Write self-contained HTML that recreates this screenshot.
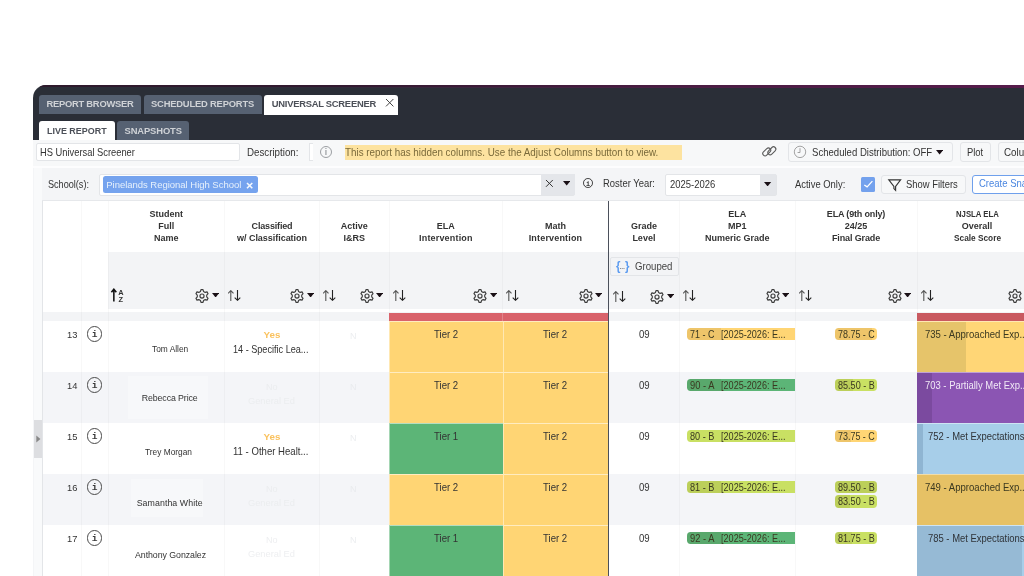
<!DOCTYPE html>
<html><head><meta charset="utf-8"><title>Universal Screener</title>
<style>
html,body{margin:0;padding:0;background:#fff;}
body{width:1024px;height:576px;overflow:hidden;position:relative;font-family:"Liberation Sans",sans-serif;}
#p{position:absolute;left:0;top:0;width:1024px;height:576px;overflow:hidden;will-change:transform;}
#p div,#p span,#p svg{position:absolute;}
#p span{white-space:nowrap;}
</style></head><body><div id="p">
<div style="left:33px;top:85px;width:991px;height:491px;background:#f4f5f7;border-top-left-radius:13px;overflow:hidden;"></div>
<div style="left:33px;top:85px;width:991px;height:55px;background:#2a2e37;border-top-left-radius:13px;overflow:hidden;"><div style="left:0;top:0;width:100%;height:1.7px;background:linear-gradient(to right,#2e1a2c 0,#321a30 30%,#4a1c42 65%,#561c4b 100%);"></div><div style="left:0;top:1.7px;width:100%;height:1.5px;background:linear-gradient(to right,rgba(86,28,75,0) 0,rgba(86,28,75,0.15) 30%,rgba(86,28,75,0.75) 65%,rgba(86,28,75,1) 100%);"></div></div>
<div style="left:39px;top:94.75px;width:102px;height:19.5px;background:#566172;border-radius:3px 3px 0 0;"></div>
<span style="left:46.50px;top:98.20px;font-size:9.4px;line-height:12px;letter-spacing:-0.259px;color:#cfd2d6;font-weight:700;">REPORT BROWSER</span>
<div style="left:143.5px;top:94.75px;width:118.1px;height:19.5px;background:#566172;border-radius:3px 3px 0 0;"></div>
<span style="left:151.00px;top:98.20px;font-size:9.4px;line-height:12px;letter-spacing:-0.191px;color:#cfd2d6;font-weight:700;">SCHEDULED REPORTS</span>
<div style="left:264.25px;top:94.6px;width:133.75px;height:20px;background:#fff;border-radius:3px 3px 0 0;"></div>
<span style="left:271.75px;top:98.20px;font-size:9.4px;line-height:12px;letter-spacing:-0.252px;color:#4c5058;font-weight:700;">UNIVERSAL SCREENER</span>
<div style="left:39px;top:120.5px;width:76px;height:19.5px;background:#fff;border-radius:3px 3px 0 0;"></div>
<span style="left:47.00px;top:124.80px;font-size:9.4px;line-height:12px;transform:scaleX(0.9541);transform-origin:0 0;color:#4c5058;font-weight:700;">LIVE REPORT</span>
<div style="left:117.25px;top:120.5px;width:71.75px;height:19.5px;background:#566172;border-radius:3px 3px 0 0;"></div>
<span style="left:124.50px;top:124.80px;font-size:9.4px;line-height:12px;letter-spacing:-0.111px;color:#cfd2d6;font-weight:700;">SNAPSHOTS</span>
<div style="left:33px;top:140px;width:991px;height:26px;background:#f7f8f9;"></div>
<div style="left:33px;top:166px;width:991px;height:1.6px;background:#fdfdfe;"></div>
<div style="left:35.5px;top:142.5px;width:204px;height:18.75px;background:#fff;border:1px solid #e3e5e8;border-radius:2px;box-sizing:border-box;"></div>
<span style="left:39.50px;top:145.80px;font-size:10.4px;line-height:14px;transform:scaleX(0.8981);transform-origin:0 0;color:#333;">HS Universal Screener</span>
<span style="left:246.50px;top:145.80px;font-size:10.4px;line-height:14px;transform:scaleX(0.9379);transform-origin:0 0;color:#333;">Description:</span>
<div style="left:308.75px;top:142.5px;width:4.25px;height:18.75px;background:#fff;border:1px solid #e3e5e8;border-right:0;box-sizing:border-box;"></div>
<div style="left:345px;top:145.25px;width:336.75px;height:14.5px;background:#fde3a0;"></div>
<span style="left:345.40px;top:146.00px;font-size:10.4px;line-height:14px;transform:scaleX(0.9467);transform-origin:0 0;color:#7a6a3a;">This report has hidden columns. Use the Adjust Columns button to view.</span>
<div style="left:787.5px;top:142px;width:165.75px;height:19.5px;background:#f7f8f9;border:1px solid #e3e5e8;border-radius:3px;box-sizing:border-box;"></div>
<span style="left:811.70px;top:145.80px;font-size:10.4px;line-height:14px;transform:scaleX(0.9209);transform-origin:0 0;color:#333;">Scheduled Distribution: OFF</span>
<div style="left:960px;top:142px;width:30.75px;height:19.5px;background:#f7f8f9;border:1px solid #e3e5e8;border-radius:3px;box-sizing:border-box;"></div>
<span style="left:967.30px;top:145.80px;font-size:10.4px;line-height:14px;transform:scaleX(0.9040);transform-origin:0 0;color:#333;">Plot</span>
<div style="left:997.5px;top:142px;width:42.5px;height:19.5px;background:#f7f8f9;border:1px solid #e3e5e8;border-radius:3px;box-sizing:border-box;"></div>
<span style="left:1003.80px;top:145.80px;font-size:10.4px;line-height:14px;transform:scaleX(0.9455);transform-origin:0 0;color:#333;">Columns</span>
<span style="left:48.00px;top:177.50px;font-size:10.4px;line-height:14px;transform:scaleX(0.8757);transform-origin:0 0;color:#333;">School(s):</span>
<div style="left:98.75px;top:173.5px;width:476.5px;height:22px;background:#fff;border:1px solid #e3e5e8;border-radius:2px;box-sizing:border-box;"></div>
<div style="left:541px;top:174.25px;width:33.5px;height:20.5px;background:#e4e6ea;"></div>
<div style="left:102.5px;top:176.4px;width:155.5px;height:16.4px;background:#75a3ee;border-radius:2.5px;"></div>
<span style="left:106.25px;top:179.30px;font-size:9.5px;line-height:12px;letter-spacing:-0.024px;color:#e6f0fb;">Pinelands Regional High School</span>
<span style="left:603.00px;top:176.90px;font-size:10.4px;line-height:14px;transform:scaleX(0.9085);transform-origin:0 0;color:#333;">Roster Year:</span>
<div style="left:665px;top:173.5px;width:112px;height:22px;background:#fff;border:1px solid #e3e5e8;border-radius:2px;box-sizing:border-box;"></div>
<div style="left:760px;top:174.25px;width:16.25px;height:20.5px;background:#e4e6ea;"></div>
<span style="left:669.75px;top:177.60px;font-size:10.4px;line-height:14px;transform:scaleX(0.9098);transform-origin:0 0;color:#333;">2025-2026</span>
<span style="left:795.00px;top:177.90px;font-size:10.4px;line-height:14px;transform:scaleX(0.9066);transform-origin:0 0;color:#333;">Active Only:</span>
<div style="left:860.6px;top:176.9px;width:14.5px;height:14.7px;background:#73a1ed;border-radius:1.5px;"></div>
<div style="left:881px;top:174.5px;width:84.6px;height:19.3px;background:#f7f8f9;border:1px solid #e3e5e8;border-radius:3px;box-sizing:border-box;"></div>
<span style="left:906.40px;top:177.50px;font-size:10.4px;line-height:14px;transform:scaleX(0.9053);transform-origin:0 0;color:#333;">Show Filters</span>
<div style="left:972px;top:174.5px;width:88px;height:19.3px;background:#fff;border:1px solid #6fa0ec;border-radius:3px;box-sizing:border-box;"></div>
<span style="left:979.40px;top:177.30px;font-size:10.4px;line-height:14px;transform:scaleX(0.9148);transform-origin:0 0;color:#4a86e0;">Create Snapshot</span>
<div style="left:33.75px;top:168px;width:7.75px;height:408px;background:#f9fafb;"></div>
<div style="left:42px;top:201px;width:982px;height:375px;background:#fff;"></div>
<div style="left:108px;top:252px;width:916px;height:57px;background:#f3f4f6;"></div>
<div style="left:42px;top:312px;width:982px;height:9.25px;background:#f3f4f6;"></div>
<div style="left:42px;top:372.25px;width:982px;height:51px;background:#f4f5f8;"></div>
<div style="left:42px;top:474.25px;width:982px;height:51px;background:#f4f5f8;"></div>
<span style="left:149.50px;top:207.50px;font-size:9px;line-height:12px;letter-spacing:-0.000px;color:#333;font-weight:700;">Student</span>
<span style="left:158.25px;top:219.70px;font-size:9px;line-height:12px;letter-spacing:0.000px;color:#333;font-weight:700;">Full</span>
<span style="left:153.99px;top:232.00px;font-size:9px;line-height:12px;letter-spacing:-0.000px;color:#333;font-weight:700;">Name</span>
<span style="left:251.55px;top:219.50px;font-size:9px;line-height:12px;letter-spacing:-0.162px;color:#333;font-weight:700;">Classified</span>
<span style="left:237.00px;top:232.00px;font-size:9px;line-height:12px;letter-spacing:-0.031px;color:#333;font-weight:700;">w/ Classification</span>
<span style="left:340.74px;top:219.50px;font-size:9px;line-height:12px;letter-spacing:0.000px;color:#333;font-weight:700;">Active</span>
<span style="left:343.50px;top:232.00px;font-size:9px;line-height:12px;letter-spacing:0.000px;color:#333;font-weight:700;">I&amp;RS</span>
<span style="left:436.85px;top:219.50px;font-size:9px;line-height:12px;letter-spacing:-0.000px;color:#333;font-weight:700;">ELA</span>
<span style="left:419.05px;top:232.00px;font-size:9px;line-height:12px;letter-spacing:0.175px;color:#333;font-weight:700;">Intervention</span>
<span style="left:545.00px;top:219.50px;font-size:9px;line-height:12px;letter-spacing:0.000px;color:#333;font-weight:700;">Math</span>
<span style="left:528.70px;top:232.00px;font-size:9px;line-height:12px;letter-spacing:0.175px;color:#333;font-weight:700;">Intervention</span>
<span style="left:630.89px;top:219.50px;font-size:9px;line-height:12px;letter-spacing:-0.000px;color:#333;font-weight:700;">Grade</span>
<span style="left:632.39px;top:232.00px;font-size:9px;line-height:12px;letter-spacing:0.000px;color:#333;font-weight:700;">Level</span>
<span style="left:728.25px;top:207.50px;font-size:9px;line-height:12px;letter-spacing:-0.000px;color:#333;font-weight:700;">ELA</span>
<span style="left:728.00px;top:219.70px;font-size:9px;line-height:12px;letter-spacing:-0.000px;color:#333;font-weight:700;">MP1</span>
<span style="left:704.99px;top:232.00px;font-size:9px;line-height:12px;letter-spacing:-0.000px;color:#333;font-weight:700;">Numeric Grade</span>
<span style="left:826.85px;top:207.50px;font-size:9px;line-height:12px;letter-spacing:-0.169px;color:#333;font-weight:700;">ELA (9th only)</span>
<span style="left:844.74px;top:219.70px;font-size:9px;line-height:12px;letter-spacing:0.000px;color:#333;font-weight:700;">24/25</span>
<span style="left:831.90px;top:232.00px;font-size:9px;line-height:12px;letter-spacing:-0.119px;color:#333;font-weight:700;">Final Grade</span>
<span style="left:955.60px;top:207.50px;font-size:9px;line-height:12px;transform:scaleX(0.8616);transform-origin:0 0;color:#333;font-weight:700;">NJSLA ELA</span>
<span style="left:961.74px;top:219.70px;font-size:9px;line-height:12px;letter-spacing:0.000px;color:#333;font-weight:700;">Overall</span>
<span style="left:953.50px;top:232.00px;font-size:9px;line-height:12px;transform:scaleX(0.9209);transform-origin:0 0;color:#333;font-weight:700;">Scale Score</span>
<div style="left:609.6px;top:257px;width:69.4px;height:18.8px;background:#f3f4f6;border:1px solid #e3e5e8;border-radius:2px;box-sizing:border-box;"></div>
<span style="left:615.8px;top:258.6px;font-size:12px;line-height:14px;color:#5b9bf0;font-weight:700;transform:scaleX(.95);transform-origin:0 0;">{</span>
<span style="left:624.6px;top:258.6px;font-size:12px;line-height:14px;color:#5b9bf0;font-weight:700;transform:scaleX(.95);transform-origin:0 0;">}</span>
<span style="left:619.6px;top:262.4px;font-size:7px;line-height:10px;color:#8a8d92;letter-spacing:-0.2px;font-weight:700;">...</span>
<span style="left:634.50px;top:260.00px;font-size:10.4px;line-height:14px;transform:scaleX(0.9265);transform-origin:0 0;color:#444;">Grouped</span>
<div style="left:80.5px;top:201px;width:1px;height:375px;background:rgba(0,0,0,0.028);"></div>
<div style="left:107.5px;top:201px;width:1px;height:375px;background:rgba(0,0,0,0.028);"></div>
<div style="left:224px;top:201px;width:1px;height:375px;background:rgba(0,0,0,0.028);"></div>
<div style="left:319px;top:201px;width:1px;height:375px;background:rgba(0,0,0,0.028);"></div>
<div style="left:388.5px;top:201px;width:1px;height:375px;background:rgba(0,0,0,0.028);"></div>
<div style="left:502.2px;top:201px;width:1px;height:375px;background:rgba(0,0,0,0.028);"></div>
<div style="left:679px;top:201px;width:1px;height:375px;background:rgba(0,0,0,0.028);"></div>
<div style="left:794.5px;top:201px;width:1px;height:375px;background:rgba(0,0,0,0.028);"></div>
<div style="left:916.5px;top:201px;width:1px;height:375px;background:rgba(0,0,0,0.028);"></div>
<div style="left:389.25px;top:312.5px;width:219.05px;height:8.75px;background:#d9636b;"></div>
<div style="left:917px;top:312.5px;width:107px;height:8.75px;background:#c95a60;"></div>
<div style="left:502.2px;top:312.5px;width:1px;height:8.75px;background:rgba(255,255,255,.22);"></div>
<div style="left:389.25px;top:321.25px;width:113.45px;height:51px;background:#ffd574;border-top:1px solid rgba(255,255,255,.55);border-left:1px solid rgba(255,255,255,.45);box-sizing:border-box;"></div>
<span style="left:433.73px;top:327.50px;font-size:10.4px;line-height:14px;transform:scaleX(0.9250);transform-origin:0 0;color:#333;">Tier 2</span>
<div style="left:502.95px;top:321.25px;width:105.35px;height:51px;background:#ffd574;border-top:1px solid rgba(255,255,255,.55);border-left:1px solid rgba(255,255,255,.45);box-sizing:border-box;"></div>
<span style="left:543.38px;top:327.50px;font-size:10.4px;line-height:14px;transform:scaleX(0.9250);transform-origin:0 0;color:#333;">Tier 2</span>
<div style="left:389.25px;top:372.25px;width:113.45px;height:51px;background:#ffd574;border-top:1px solid rgba(255,255,255,.55);border-left:1px solid rgba(255,255,255,.45);box-sizing:border-box;"></div>
<span style="left:433.73px;top:378.50px;font-size:10.4px;line-height:14px;transform:scaleX(0.9250);transform-origin:0 0;color:#333;">Tier 2</span>
<div style="left:502.95px;top:372.25px;width:105.35px;height:51px;background:#ffd574;border-top:1px solid rgba(255,255,255,.55);border-left:1px solid rgba(255,255,255,.45);box-sizing:border-box;"></div>
<span style="left:543.38px;top:378.50px;font-size:10.4px;line-height:14px;transform:scaleX(0.9250);transform-origin:0 0;color:#333;">Tier 2</span>
<div style="left:389.25px;top:423.25px;width:113.45px;height:51px;background:#5cb577;border-top:1px solid rgba(255,255,255,.55);border-left:1px solid rgba(255,255,255,.45);box-sizing:border-box;"></div>
<span style="left:433.73px;top:429.50px;font-size:10.4px;line-height:14px;transform:scaleX(0.9250);transform-origin:0 0;color:#333;">Tier 1</span>
<div style="left:502.95px;top:423.25px;width:105.35px;height:51px;background:#ffd574;border-top:1px solid rgba(255,255,255,.55);border-left:1px solid rgba(255,255,255,.45);box-sizing:border-box;"></div>
<span style="left:543.38px;top:429.50px;font-size:10.4px;line-height:14px;transform:scaleX(0.9250);transform-origin:0 0;color:#333;">Tier 2</span>
<div style="left:389.25px;top:474.25px;width:113.45px;height:51px;background:#ffd574;border-top:1px solid rgba(255,255,255,.55);border-left:1px solid rgba(255,255,255,.45);box-sizing:border-box;"></div>
<span style="left:433.73px;top:480.50px;font-size:10.4px;line-height:14px;transform:scaleX(0.9250);transform-origin:0 0;color:#333;">Tier 2</span>
<div style="left:502.95px;top:474.25px;width:105.35px;height:51px;background:#ffd574;border-top:1px solid rgba(255,255,255,.55);border-left:1px solid rgba(255,255,255,.45);box-sizing:border-box;"></div>
<span style="left:543.38px;top:480.50px;font-size:10.4px;line-height:14px;transform:scaleX(0.9250);transform-origin:0 0;color:#333;">Tier 2</span>
<div style="left:389.25px;top:525.25px;width:113.45px;height:51px;background:#5cb577;border-top:1px solid rgba(255,255,255,.55);border-left:1px solid rgba(255,255,255,.45);box-sizing:border-box;"></div>
<span style="left:433.73px;top:531.50px;font-size:10.4px;line-height:14px;transform:scaleX(0.9250);transform-origin:0 0;color:#333;">Tier 1</span>
<div style="left:502.95px;top:525.25px;width:105.35px;height:51px;background:#ffd574;border-top:1px solid rgba(255,255,255,.55);border-left:1px solid rgba(255,255,255,.45);box-sizing:border-box;"></div>
<span style="left:543.38px;top:531.50px;font-size:10.4px;line-height:14px;transform:scaleX(0.9250);transform-origin:0 0;color:#333;">Tier 2</span>
<div style="left:607.75px;top:201px;width:1.35px;height:375px;background:#4b505b;"></div>
<div style="left:42px;top:199.8px;width:982px;height:1.2px;background:#e6e8eb;"></div>
<div style="left:41.5px;top:201px;width:1px;height:375px;background:#e3e5e8;"></div>
<div style="left:127.75px;top:375.6px;width:80.65px;height:43.8px;background:#f7f8fa;"></div>
<div style="left:131px;top:478.5px;width:72px;height:38.2px;background:#f7f8fa;"></div>
<span style="left:66.50px;top:327.50px;font-size:9.9px;line-height:13px;transform:scaleX(0.9444);transform-origin:0 0;color:#333;">13</span>
<div style="left:86.9px;top:326px;width:15.6px;height:15.6px;border:1.4px solid #4a4a4a;border-radius:50%;box-sizing:border-box;"></div>
<span style="left:90.7px;top:329.4px;width:8px;text-align:center;font-family:'Liberation Mono',monospace;font-weight:700;font-size:9.6px;line-height:12px;color:#3a3a3a">i</span>
<span style="left:151.78px;top:343.50px;font-size:8.8px;line-height:11px;transform:scaleX(0.9501);transform-origin:0 0;color:#333;">Tom Allen</span>
<span style="left:263.55px;top:328.40px;font-size:9.8px;line-height:13px;letter-spacing:0.000px;color:#fac25f;font-weight:700;">Yes</span>
<span style="left:233.00px;top:342.90px;font-size:10.4px;line-height:14px;transform:scaleX(0.8765);transform-origin:0 0;color:#333;">14 - Specific Lea...</span>
<span style="left:350.23px;top:328.60px;font-size:9.8px;line-height:13px;transform:scaleX(0.9250);transform-origin:0 0;color:#eceef0;">N</span>
<span style="left:638.55px;top:327.50px;font-size:10.4px;line-height:14px;transform:scaleX(0.9250);transform-origin:0 0;color:#333;">09</span>
<div style="left:687.1px;top:327.95px;width:107.9px;height:12.45px;background:#ffd574;border-radius:3.7px 0 0 3.7px;"></div>
<div style="left:687.1px;top:327.95px;width:34.15px;height:12.45px;background:rgba(60,40,0,0.085);border-radius:3.7px 0 0 3.7px;"></div>
<span style="left:689.80px;top:327.80px;font-size:10.4px;line-height:14px;transform:scaleX(0.8615);transform-origin:0 0;color:#3a3820;">71 - C</span>
<span style="left:720.80px;top:327.80px;font-size:10.4px;line-height:14px;transform:scaleX(0.8742);transform-origin:0 0;color:#3a3820;">[2025-2026: E...</span>
<div style="left:834.75px;top:327.95px;width:42.45px;height:12.45px;background:#ffd574;border-radius:3.7px;"></div>
<div style="left:834.75px;top:327.95px;width:37.25px;height:12.45px;background:rgba(60,40,0,0.085);border-radius:3.7px 0 0 3.7px;"></div>
<span style="left:837.80px;top:327.95px;font-size:10.4px;line-height:14px;transform:scaleX(0.8602);transform-origin:0 0;color:#3a3820;">78.75 - C</span>
<div style="left:917.1px;top:321.25px;width:106.9px;height:51px;background:#ffd676;border-top:1px solid rgba(255,255,255,.45);box-sizing:border-box;"></div>
<div style="left:917.1px;top:322.25px;width:48.7px;height:50px;background:#e6c46a;"></div>
<span style="left:925.00px;top:328.10px;font-size:10.4px;line-height:14px;transform:scaleX(0.9182);transform-origin:0 0;color:#3a3820;">735 - Approached Exp...</span>
<span style="left:66.50px;top:378.50px;font-size:9.9px;line-height:13px;transform:scaleX(0.9444);transform-origin:0 0;color:#333;">14</span>
<div style="left:86.9px;top:377px;width:15.6px;height:15.6px;border:1.4px solid #4a4a4a;border-radius:50%;box-sizing:border-box;"></div>
<span style="left:90.7px;top:380.4px;width:8px;text-align:center;font-family:'Liberation Mono',monospace;font-weight:700;font-size:9.6px;line-height:12px;color:#3a3a3a">i</span>
<span style="left:141.70px;top:392.70px;font-size:8.8px;line-height:11px;letter-spacing:-0.094px;color:#333;">Rebecca Price</span>
<span style="left:265.71px;top:379.60px;font-size:9.8px;line-height:13px;transform:scaleX(0.9250);transform-origin:0 0;color:#ebedef;">No</span>
<span style="left:248.30px;top:394.20px;font-size:9.8px;line-height:13px;transform:scaleX(0.9460);transform-origin:0 0;color:#ebedef;">General Ed</span>
<span style="left:350.23px;top:379.60px;font-size:9.8px;line-height:13px;transform:scaleX(0.9250);transform-origin:0 0;color:#e9ebee;">N</span>
<span style="left:638.55px;top:378.50px;font-size:10.4px;line-height:14px;transform:scaleX(0.9250);transform-origin:0 0;color:#333;">09</span>
<div style="left:687.1px;top:378.95px;width:107.9px;height:12.45px;background:#5cb577;border-radius:3.7px 0 0 3.7px;"></div>
<div style="left:687.1px;top:378.95px;width:34.15px;height:12.45px;background:rgba(60,40,0,0.085);border-radius:3.7px 0 0 3.7px;"></div>
<span style="left:689.80px;top:378.80px;font-size:10.4px;line-height:14px;transform:scaleX(0.8979);transform-origin:0 0;color:#3a3820;">90 - A</span>
<span style="left:720.80px;top:378.80px;font-size:10.4px;line-height:14px;transform:scaleX(0.8742);transform-origin:0 0;color:#3a3820;">[2025-2026: E...</span>
<div style="left:834.75px;top:378.95px;width:42.45px;height:12.45px;background:#c9e063;border-radius:3.7px;"></div>
<div style="left:834.75px;top:378.95px;width:17.75px;height:12.45px;background:rgba(60,40,0,0.085);border-radius:3.7px 0 0 3.7px;"></div>
<span style="left:837.80px;top:378.95px;font-size:10.4px;line-height:14px;transform:scaleX(0.8719);transform-origin:0 0;color:#3a3820;">85.50 - B</span>
<div style="left:917.1px;top:372.25px;width:106.9px;height:51px;background:#8b55b3;border-top:1px solid rgba(255,255,255,.45);box-sizing:border-box;"></div>
<div style="left:917.1px;top:373.25px;width:15.1px;height:50px;background:#7b4a9f;"></div>
<span style="left:925.00px;top:379.10px;font-size:10.4px;line-height:14px;transform:scaleX(0.9080);transform-origin:0 0;color:#f1e9f6;">703 - Partially Met Exp...</span>
<span style="left:66.50px;top:429.50px;font-size:9.9px;line-height:13px;transform:scaleX(0.9444);transform-origin:0 0;color:#333;">15</span>
<div style="left:86.9px;top:428px;width:15.6px;height:15.6px;border:1.4px solid #4a4a4a;border-radius:50%;box-sizing:border-box;"></div>
<span style="left:90.7px;top:431.4px;width:8px;text-align:center;font-family:'Liberation Mono',monospace;font-weight:700;font-size:9.6px;line-height:12px;color:#3a3a3a">i</span>
<span style="left:145.20px;top:446.50px;font-size:8.8px;line-height:11px;transform:scaleX(0.9484);transform-origin:0 0;color:#333;">Trey Morgan</span>
<span style="left:263.55px;top:430.40px;font-size:9.8px;line-height:13px;letter-spacing:0.000px;color:#fac25f;font-weight:700;">Yes</span>
<span style="left:233.00px;top:444.90px;font-size:10.4px;line-height:14px;transform:scaleX(0.9220);transform-origin:0 0;color:#333;">11 - Other Healt...</span>
<span style="left:350.23px;top:430.60px;font-size:9.8px;line-height:13px;transform:scaleX(0.9250);transform-origin:0 0;color:#eceef0;">N</span>
<span style="left:638.55px;top:429.50px;font-size:10.4px;line-height:14px;transform:scaleX(0.9250);transform-origin:0 0;color:#333;">09</span>
<div style="left:687.1px;top:429.95px;width:107.9px;height:12.45px;background:#c9e063;border-radius:3.7px 0 0 3.7px;"></div>
<span style="left:689.80px;top:429.80px;font-size:10.4px;line-height:14px;transform:scaleX(0.8794);transform-origin:0 0;color:#3a3820;">80 - B</span>
<span style="left:720.80px;top:429.80px;font-size:10.4px;line-height:14px;transform:scaleX(0.8742);transform-origin:0 0;color:#3a3820;">[2025-2026: E...</span>
<div style="left:834.75px;top:429.95px;width:42.45px;height:12.45px;background:#ffd574;border-radius:3.7px;"></div>
<div style="left:834.75px;top:429.95px;width:16.5px;height:12.45px;background:rgba(60,40,0,0.085);border-radius:3.7px 0 0 3.7px;"></div>
<span style="left:837.80px;top:429.95px;font-size:10.4px;line-height:14px;transform:scaleX(0.8602);transform-origin:0 0;color:#3a3820;">73.75 - C</span>
<div style="left:917.1px;top:423.25px;width:106.9px;height:51px;background:#a7cee9;border-top:1px solid rgba(255,255,255,.45);box-sizing:border-box;"></div>
<div style="left:917.1px;top:424.25px;width:6.4px;height:50px;background:#8fb5d2;"></div>
<span style="left:928.10px;top:430.10px;font-size:10.4px;line-height:14px;transform:scaleX(0.9084);transform-origin:0 0;color:#2f3338;">752 - Met Expectations</span>
<span style="left:66.50px;top:480.50px;font-size:9.9px;line-height:13px;transform:scaleX(0.9444);transform-origin:0 0;color:#333;">16</span>
<div style="left:86.9px;top:479px;width:15.6px;height:15.6px;border:1.4px solid #4a4a4a;border-radius:50%;box-sizing:border-box;"></div>
<span style="left:90.7px;top:482.4px;width:8px;text-align:center;font-family:'Liberation Mono',monospace;font-weight:700;font-size:9.6px;line-height:12px;color:#3a3a3a">i</span>
<span style="left:136.70px;top:498.10px;font-size:8.8px;line-height:11px;letter-spacing:0.067px;color:#333;">Samantha White</span>
<span style="left:265.71px;top:481.60px;font-size:9.8px;line-height:13px;transform:scaleX(0.9250);transform-origin:0 0;color:#ebedef;">No</span>
<span style="left:248.30px;top:496.20px;font-size:9.8px;line-height:13px;transform:scaleX(0.9460);transform-origin:0 0;color:#ebedef;">General Ed</span>
<span style="left:350.23px;top:481.60px;font-size:9.8px;line-height:13px;transform:scaleX(0.9250);transform-origin:0 0;color:#e9ebee;">N</span>
<span style="left:638.55px;top:480.50px;font-size:10.4px;line-height:14px;transform:scaleX(0.9250);transform-origin:0 0;color:#333;">09</span>
<div style="left:687.1px;top:480.95px;width:107.9px;height:12.45px;background:#c9e063;border-radius:3.7px 0 0 3.7px;"></div>
<div style="left:687.1px;top:480.95px;width:34.15px;height:12.45px;background:rgba(60,40,0,0.085);border-radius:3.7px 0 0 3.7px;"></div>
<span style="left:689.80px;top:480.80px;font-size:10.4px;line-height:14px;transform:scaleX(0.8794);transform-origin:0 0;color:#3a3820;">81 - B</span>
<span style="left:720.80px;top:480.80px;font-size:10.4px;line-height:14px;transform:scaleX(0.8742);transform-origin:0 0;color:#3a3820;">[2025-2026: E...</span>
<div style="left:834.75px;top:480.95px;width:42.45px;height:12.45px;background:#c9e063;border-radius:3.7px;"></div>
<div style="left:834.75px;top:480.95px;width:42.45px;height:12.45px;background:rgba(60,40,0,0.085);border-radius:3.7px;"></div>
<span style="left:837.80px;top:480.95px;font-size:10.4px;line-height:14px;transform:scaleX(0.8719);transform-origin:0 0;color:#3a3820;">89.50 - B</span>
<div style="left:834.75px;top:495.45px;width:42.45px;height:12.45px;background:#c9e063;border-radius:3.7px;"></div>
<div style="left:834.75px;top:495.45px;width:15px;height:12.45px;background:rgba(60,40,0,0.085);border-radius:3.7px 0 0 3.7px;"></div>
<span style="left:837.80px;top:495.45px;font-size:10.4px;line-height:14px;transform:scaleX(0.8719);transform-origin:0 0;color:#3a3820;">83.50 - B</span>
<div style="left:917.1px;top:474.25px;width:106.9px;height:51px;background:#e6c165;border-top:1px solid rgba(255,255,255,.45);box-sizing:border-box;"></div>
<span style="left:925.00px;top:481.10px;font-size:10.4px;line-height:14px;transform:scaleX(0.9182);transform-origin:0 0;color:#3a3820;">749 - Approached Exp...</span>
<span style="left:66.50px;top:531.50px;font-size:9.9px;line-height:13px;transform:scaleX(0.9444);transform-origin:0 0;color:#333;">17</span>
<div style="left:86.9px;top:530px;width:15.6px;height:15.6px;border:1.4px solid #4a4a4a;border-radius:50%;box-sizing:border-box;"></div>
<span style="left:90.7px;top:533.4px;width:8px;text-align:center;font-family:'Liberation Mono',monospace;font-weight:700;font-size:9.6px;line-height:12px;color:#3a3a3a">i</span>
<span style="left:135.00px;top:550.30px;font-size:8.8px;line-height:11px;letter-spacing:-0.057px;color:#333;">Anthony Gonzalez</span>
<span style="left:265.71px;top:532.60px;font-size:9.8px;line-height:13px;transform:scaleX(0.9250);transform-origin:0 0;color:#eeeff1;">No</span>
<span style="left:248.30px;top:547.20px;font-size:9.8px;line-height:13px;transform:scaleX(0.9460);transform-origin:0 0;color:#eeeff1;">General Ed</span>
<span style="left:350.23px;top:532.60px;font-size:9.8px;line-height:13px;transform:scaleX(0.9250);transform-origin:0 0;color:#eceef0;">N</span>
<span style="left:638.55px;top:531.50px;font-size:10.4px;line-height:14px;transform:scaleX(0.9250);transform-origin:0 0;color:#333;">09</span>
<div style="left:687.1px;top:531.95px;width:107.9px;height:12.45px;background:#5cb577;border-radius:3.7px 0 0 3.7px;"></div>
<div style="left:687.1px;top:531.95px;width:34.15px;height:12.45px;background:rgba(60,40,0,0.085);border-radius:3.7px 0 0 3.7px;"></div>
<span style="left:689.80px;top:531.80px;font-size:10.4px;line-height:14px;transform:scaleX(0.8979);transform-origin:0 0;color:#3a3820;">92 - A</span>
<span style="left:720.80px;top:531.80px;font-size:10.4px;line-height:14px;transform:scaleX(0.8742);transform-origin:0 0;color:#3a3820;">[2025-2026: E...</span>
<div style="left:834.75px;top:531.95px;width:42.45px;height:12.45px;background:#c9e063;border-radius:3.7px;"></div>
<div style="left:834.75px;top:531.95px;width:17.25px;height:12.45px;background:rgba(60,40,0,0.085);border-radius:3.7px 0 0 3.7px;"></div>
<span style="left:837.80px;top:531.95px;font-size:10.4px;line-height:14px;transform:scaleX(0.8719);transform-origin:0 0;color:#3a3820;">81.75 - B</span>
<div style="left:917.1px;top:525.25px;width:106.9px;height:51px;background:#a7cee9;border-top:1px solid rgba(255,255,255,.45);box-sizing:border-box;"></div>
<div style="left:917.1px;top:526.25px;width:104.9px;height:50px;background:#96bad5;"></div>
<span style="left:928.10px;top:532.10px;font-size:10.4px;line-height:14px;transform:scaleX(0.9084);transform-origin:0 0;color:#2f3338;">785 - Met Expectations</span>
<svg style="left:385.3px;top:98.4px;" width="9.4" height="9.4" viewBox="0 0 9.4 9.4"><path d="M1 1L8.4 8.4M8.4 1L1 8.4" stroke="#444" stroke-width="1.0" fill="none"/></svg>
<div style="left:319.9px;top:145.8px;width:12.2px;height:12.2px;border:0.9px solid #9c9fa3;border-radius:50%;box-sizing:border-box;"></div>
<span style="left:321px;top:146.9px;width:10px;text-align:center;font-family:'Liberation Sans',sans-serif;font-weight:700;font-size:8.5px;line-height:10px;color:#9c9fa3">i</span>
<svg style="left:758.5px;top:143px;" width="20" height="16" viewBox="0 0 20 16"><g fill="none" stroke="#5c5c5c" stroke-width="1.1"><rect x="3.1" y="6.6" width="9.3" height="4.6" rx="2.3" transform="rotate(-45 7.75 8.9)"/><rect x="8.2" y="5.5" width="9.3" height="4.6" rx="2.3" transform="rotate(-45 12.85 7.8)"/></g></svg>
<svg style="left:793px;top:145px;" width="14" height="14" viewBox="0 0 14 14"><circle cx="7" cy="6.9" r="5.7" fill="none" stroke="#999" stroke-width="0.9"/><path d="M7 3.2V7.5H4.6" fill="none" stroke="#999" stroke-width="0.9"/></svg>
<svg style="left:936px;top:150px;" width="7.2" height="4.6" viewBox="0 0 7.2 4.6"><path d="M0 0H7.2L3.6 4.6Z" fill="#1a1016"/></svg>
<svg style="left:245.85px;top:181.55px;" width="7.3" height="7.3" viewBox="0 0 7.3 7.3"><path d="M1 1L6.3 6.3M6.3 1L1 6.3" stroke="#f4f8fe" stroke-width="1.6" fill="none"/></svg>
<svg style="left:544.8px;top:178.8px;" width="8.8" height="8.8" viewBox="0 0 8.8 8.8"><path d="M1 1L7.8 7.8M7.8 1L1 7.8" stroke="#333" stroke-width="1.0" fill="none"/></svg>
<svg style="left:562.8px;top:181.4px;" width="7.4" height="4.4" viewBox="0 0 7.4 4.4"><path d="M0 0H7.4L3.7 4.4Z" fill="#1a1016"/></svg>
<div style="left:583.2px;top:178.2px;width:9.8px;height:9.8px;border:0.95px solid #3a3a3a;border-radius:50%;box-sizing:border-box;"></div>
<span style="left:583.1px;top:179.8px;width:10px;text-align:center;font-family:'Liberation Mono',monospace;font-weight:700;font-size:6.8px;line-height:8px;color:#3a3a3a">i</span>
<svg style="left:764.4px;top:181.6px;" width="7.2" height="4.4" viewBox="0 0 7.2 4.4"><path d="M0 0H7.2L3.6 4.4Z" fill="#1a1016"/></svg>
<svg style="left:860.6px;top:176.9px;" width="14.5" height="14.7" viewBox="0 0 14.5 14.7"><path d="M3.3 8L6.1 9.9L11.4 4.2" fill="none" stroke="#fff" stroke-width="1.25"/></svg>
<svg style="left:887px;top:178px;" width="16" height="14" viewBox="0 0 16 14"><path d="M1.8 1.9H13.6L8.6 8.4V12.3L6.9 10.6V8.4Z" fill="none" stroke="#333" stroke-width="1.15" stroke-linejoin="miter"/></svg>
<div style="left:33.75px;top:420px;width:8.5px;height:37.5px;background:#dddee1;"></div>
<svg style="left:36px;top:435px;" width="5" height="8" viewBox="0 0 5 8"><path d="M0.3 0.5L4.4 4L0.3 7.5Z" fill="#888"/></svg>
<svg style="left:110px;top:287.5px;" width="15" height="15" viewBox="0 0 15 15"><path d="M3.85 13.6V1.6M1.4 4.2L3.85 1.2L6.3 4.2" fill="none" stroke="#111" stroke-width="1.55"/><text x="8.3" y="6.5" font-family="Liberation Sans, sans-serif" font-weight="700" font-size="7.4" fill="#333">A</text><text x="8.5" y="13.6" font-family="Liberation Sans, sans-serif" font-weight="700" font-size="7.4" fill="#333">Z</text></svg>
<svg style="left:194.1px;top:287.7px;" width="16" height="16" viewBox="0 0 16 16"><path d="M6.47 3.44L6.98 1.58L9.02 1.58L9.53 3.44L11.18 4.39L13.05 3.91L14.07 5.67L12.72 7.05L12.72 8.95L14.07 10.33L13.05 12.09L11.18 11.61L9.53 12.56L9.02 14.42L6.98 14.42L6.47 12.56L4.82 11.61L2.95 12.09L1.93 10.33L3.28 8.95L3.28 7.05L1.93 5.67L2.95 3.91L4.82 4.39Z" fill="none" stroke="#3c3c3c" stroke-width="1.15" stroke-linejoin="round"/><circle cx="8" cy="8" r="2.05" fill="none" stroke="#3c3c3c" stroke-width="1.15"/></svg>
<svg style="left:211.5px;top:292.95px;" width="7.2" height="4.5" viewBox="0 0 7.2 4.5"><path d="M0 0H7.2L3.6 4.5Z" fill="#1a1016"/></svg>
<svg style="left:228.2px;top:290.4px;" width="13" height="10.9" viewBox="0 0 13 10.9"><path d="M2.8 10.900000000000034V0.6M0.09999999999999964 3.3L2.8 0.6L5.5 3.3" stroke="#555" stroke-width="1.1" fill="none"/><path d="M9.5 0V10.300000000000034M6.7 7.600000000000034L9.5 10.300000000000034L12.3 7.600000000000034" stroke="#222" stroke-width="1.1" fill="none"/></svg>
<svg style="left:289.1px;top:287.7px;" width="16" height="16" viewBox="0 0 16 16"><path d="M6.47 3.44L6.98 1.58L9.02 1.58L9.53 3.44L11.18 4.39L13.05 3.91L14.07 5.67L12.72 7.05L12.72 8.95L14.07 10.33L13.05 12.09L11.18 11.61L9.53 12.56L9.02 14.42L6.98 14.42L6.47 12.56L4.82 11.61L2.95 12.09L1.93 10.33L3.28 8.95L3.28 7.05L1.93 5.67L2.95 3.91L4.82 4.39Z" fill="none" stroke="#3c3c3c" stroke-width="1.15" stroke-linejoin="round"/><circle cx="8" cy="8" r="2.05" fill="none" stroke="#3c3c3c" stroke-width="1.15"/></svg>
<svg style="left:306.5px;top:292.95px;" width="7.2" height="4.5" viewBox="0 0 7.2 4.5"><path d="M0 0H7.2L3.6 4.5Z" fill="#1a1016"/></svg>
<svg style="left:323.2px;top:290.4px;" width="13" height="10.9" viewBox="0 0 13 10.9"><path d="M2.8 10.900000000000034V0.6M0.09999999999999964 3.3L2.8 0.6L5.5 3.3" stroke="#555" stroke-width="1.1" fill="none"/><path d="M9.5 0V10.300000000000034M6.7 7.600000000000034L9.5 10.300000000000034L12.3 7.600000000000034" stroke="#222" stroke-width="1.1" fill="none"/></svg>
<svg style="left:358.6px;top:287.7px;" width="16" height="16" viewBox="0 0 16 16"><path d="M6.47 3.44L6.98 1.58L9.02 1.58L9.53 3.44L11.18 4.39L13.05 3.91L14.07 5.67L12.72 7.05L12.72 8.95L14.07 10.33L13.05 12.09L11.18 11.61L9.53 12.56L9.02 14.42L6.98 14.42L6.47 12.56L4.82 11.61L2.95 12.09L1.93 10.33L3.28 8.95L3.28 7.05L1.93 5.67L2.95 3.91L4.82 4.39Z" fill="none" stroke="#3c3c3c" stroke-width="1.15" stroke-linejoin="round"/><circle cx="8" cy="8" r="2.05" fill="none" stroke="#3c3c3c" stroke-width="1.15"/></svg>
<svg style="left:376px;top:292.95px;" width="7.2" height="4.5" viewBox="0 0 7.2 4.5"><path d="M0 0H7.2L3.6 4.5Z" fill="#1a1016"/></svg>
<svg style="left:392.7px;top:290.4px;" width="13" height="10.9" viewBox="0 0 13 10.9"><path d="M2.8 10.900000000000034V0.6M0.09999999999999964 3.3L2.8 0.6L5.5 3.3" stroke="#555" stroke-width="1.1" fill="none"/><path d="M9.5 0V10.300000000000034M6.7 7.600000000000034L9.5 10.300000000000034L12.3 7.600000000000034" stroke="#222" stroke-width="1.1" fill="none"/></svg>
<svg style="left:472.3px;top:287.7px;" width="16" height="16" viewBox="0 0 16 16"><path d="M6.47 3.44L6.98 1.58L9.02 1.58L9.53 3.44L11.18 4.39L13.05 3.91L14.07 5.67L12.72 7.05L12.72 8.95L14.07 10.33L13.05 12.09L11.18 11.61L9.53 12.56L9.02 14.42L6.98 14.42L6.47 12.56L4.82 11.61L2.95 12.09L1.93 10.33L3.28 8.95L3.28 7.05L1.93 5.67L2.95 3.91L4.82 4.39Z" fill="none" stroke="#3c3c3c" stroke-width="1.15" stroke-linejoin="round"/><circle cx="8" cy="8" r="2.05" fill="none" stroke="#3c3c3c" stroke-width="1.15"/></svg>
<svg style="left:489.7px;top:292.95px;" width="7.2" height="4.5" viewBox="0 0 7.2 4.5"><path d="M0 0H7.2L3.6 4.5Z" fill="#1a1016"/></svg>
<svg style="left:506.4px;top:290.4px;" width="13" height="10.9" viewBox="0 0 13 10.9"><path d="M2.8 10.900000000000034V0.6M0.09999999999999964 3.3L2.8 0.6L5.5 3.3" stroke="#555" stroke-width="1.1" fill="none"/><path d="M9.5 0V10.300000000000034M6.7 7.600000000000034L9.5 10.300000000000034L12.3 7.600000000000034" stroke="#222" stroke-width="1.1" fill="none"/></svg>
<svg style="left:577.9px;top:287.7px;" width="16" height="16" viewBox="0 0 16 16"><path d="M6.47 3.44L6.98 1.58L9.02 1.58L9.53 3.44L11.18 4.39L13.05 3.91L14.07 5.67L12.72 7.05L12.72 8.95L14.07 10.33L13.05 12.09L11.18 11.61L9.53 12.56L9.02 14.42L6.98 14.42L6.47 12.56L4.82 11.61L2.95 12.09L1.93 10.33L3.28 8.95L3.28 7.05L1.93 5.67L2.95 3.91L4.82 4.39Z" fill="none" stroke="#3c3c3c" stroke-width="1.15" stroke-linejoin="round"/><circle cx="8" cy="8" r="2.05" fill="none" stroke="#3c3c3c" stroke-width="1.15"/></svg>
<svg style="left:595.3px;top:292.95px;" width="7.2" height="4.5" viewBox="0 0 7.2 4.5"><path d="M0 0H7.2L3.6 4.5Z" fill="#1a1016"/></svg>
<svg style="left:612.8px;top:291.4px;" width="13" height="10.9" viewBox="0 0 13 10.9"><path d="M2.8 10.900000000000034V0.6M0.09999999999999964 3.3L2.8 0.6L5.5 3.3" stroke="#555" stroke-width="1.1" fill="none"/><path d="M9.5 0V10.300000000000034M6.7 7.600000000000034L9.5 10.300000000000034L12.3 7.600000000000034" stroke="#222" stroke-width="1.1" fill="none"/></svg>
<svg style="left:649.1px;top:288.7px;" width="16" height="16" viewBox="0 0 16 16"><path d="M6.47 3.44L6.98 1.58L9.02 1.58L9.53 3.44L11.18 4.39L13.05 3.91L14.07 5.67L12.72 7.05L12.72 8.95L14.07 10.33L13.05 12.09L11.18 11.61L9.53 12.56L9.02 14.42L6.98 14.42L6.47 12.56L4.82 11.61L2.95 12.09L1.93 10.33L3.28 8.95L3.28 7.05L1.93 5.67L2.95 3.91L4.82 4.39Z" fill="none" stroke="#3c3c3c" stroke-width="1.15" stroke-linejoin="round"/><circle cx="8" cy="8" r="2.05" fill="none" stroke="#3c3c3c" stroke-width="1.15"/></svg>
<svg style="left:666.5px;top:293.95px;" width="7.2" height="4.5" viewBox="0 0 7.2 4.5"><path d="M0 0H7.2L3.6 4.5Z" fill="#1a1016"/></svg>
<svg style="left:683.2px;top:290.4px;" width="13" height="10.9" viewBox="0 0 13 10.9"><path d="M2.8 10.900000000000034V0.6M0.09999999999999964 3.3L2.8 0.6L5.5 3.3" stroke="#555" stroke-width="1.1" fill="none"/><path d="M9.5 0V10.300000000000034M6.7 7.600000000000034L9.5 10.300000000000034L12.3 7.600000000000034" stroke="#222" stroke-width="1.1" fill="none"/></svg>
<svg style="left:764.6px;top:287.7px;" width="16" height="16" viewBox="0 0 16 16"><path d="M6.47 3.44L6.98 1.58L9.02 1.58L9.53 3.44L11.18 4.39L13.05 3.91L14.07 5.67L12.72 7.05L12.72 8.95L14.07 10.33L13.05 12.09L11.18 11.61L9.53 12.56L9.02 14.42L6.98 14.42L6.47 12.56L4.82 11.61L2.95 12.09L1.93 10.33L3.28 8.95L3.28 7.05L1.93 5.67L2.95 3.91L4.82 4.39Z" fill="none" stroke="#3c3c3c" stroke-width="1.15" stroke-linejoin="round"/><circle cx="8" cy="8" r="2.05" fill="none" stroke="#3c3c3c" stroke-width="1.15"/></svg>
<svg style="left:782px;top:292.95px;" width="7.2" height="4.5" viewBox="0 0 7.2 4.5"><path d="M0 0H7.2L3.6 4.5Z" fill="#1a1016"/></svg>
<svg style="left:798.7px;top:290.4px;" width="13" height="10.9" viewBox="0 0 13 10.9"><path d="M2.8 10.900000000000034V0.6M0.09999999999999964 3.3L2.8 0.6L5.5 3.3" stroke="#555" stroke-width="1.1" fill="none"/><path d="M9.5 0V10.300000000000034M6.7 7.600000000000034L9.5 10.300000000000034L12.3 7.600000000000034" stroke="#222" stroke-width="1.1" fill="none"/></svg>
<svg style="left:886.6px;top:287.7px;" width="16" height="16" viewBox="0 0 16 16"><path d="M6.47 3.44L6.98 1.58L9.02 1.58L9.53 3.44L11.18 4.39L13.05 3.91L14.07 5.67L12.72 7.05L12.72 8.95L14.07 10.33L13.05 12.09L11.18 11.61L9.53 12.56L9.02 14.42L6.98 14.42L6.47 12.56L4.82 11.61L2.95 12.09L1.93 10.33L3.28 8.95L3.28 7.05L1.93 5.67L2.95 3.91L4.82 4.39Z" fill="none" stroke="#3c3c3c" stroke-width="1.15" stroke-linejoin="round"/><circle cx="8" cy="8" r="2.05" fill="none" stroke="#3c3c3c" stroke-width="1.15"/></svg>
<svg style="left:904px;top:292.95px;" width="7.2" height="4.5" viewBox="0 0 7.2 4.5"><path d="M0 0H7.2L3.6 4.5Z" fill="#1a1016"/></svg>
<svg style="left:920.7px;top:290.4px;" width="13" height="10.9" viewBox="0 0 13 10.9"><path d="M2.8 10.900000000000034V0.6M0.09999999999999964 3.3L2.8 0.6L5.5 3.3" stroke="#555" stroke-width="1.1" fill="none"/><path d="M9.5 0V10.300000000000034M6.7 7.600000000000034L9.5 10.300000000000034L12.3 7.600000000000034" stroke="#222" stroke-width="1.1" fill="none"/></svg>
<svg style="left:1006.6px;top:287.7px;" width="16" height="16" viewBox="0 0 16 16"><path d="M6.47 3.44L6.98 1.58L9.02 1.58L9.53 3.44L11.18 4.39L13.05 3.91L14.07 5.67L12.72 7.05L12.72 8.95L14.07 10.33L13.05 12.09L11.18 11.61L9.53 12.56L9.02 14.42L6.98 14.42L6.47 12.56L4.82 11.61L2.95 12.09L1.93 10.33L3.28 8.95L3.28 7.05L1.93 5.67L2.95 3.91L4.82 4.39Z" fill="none" stroke="#3c3c3c" stroke-width="1.15" stroke-linejoin="round"/><circle cx="8" cy="8" r="2.05" fill="none" stroke="#3c3c3c" stroke-width="1.15"/></svg>
<svg style="left:1024px;top:292.95px;" width="7.2" height="4.5" viewBox="0 0 7.2 4.5"><path d="M0 0H7.2L3.6 4.5Z" fill="#1a1016"/></svg>
<!--ICONS-->
</div></body></html>
